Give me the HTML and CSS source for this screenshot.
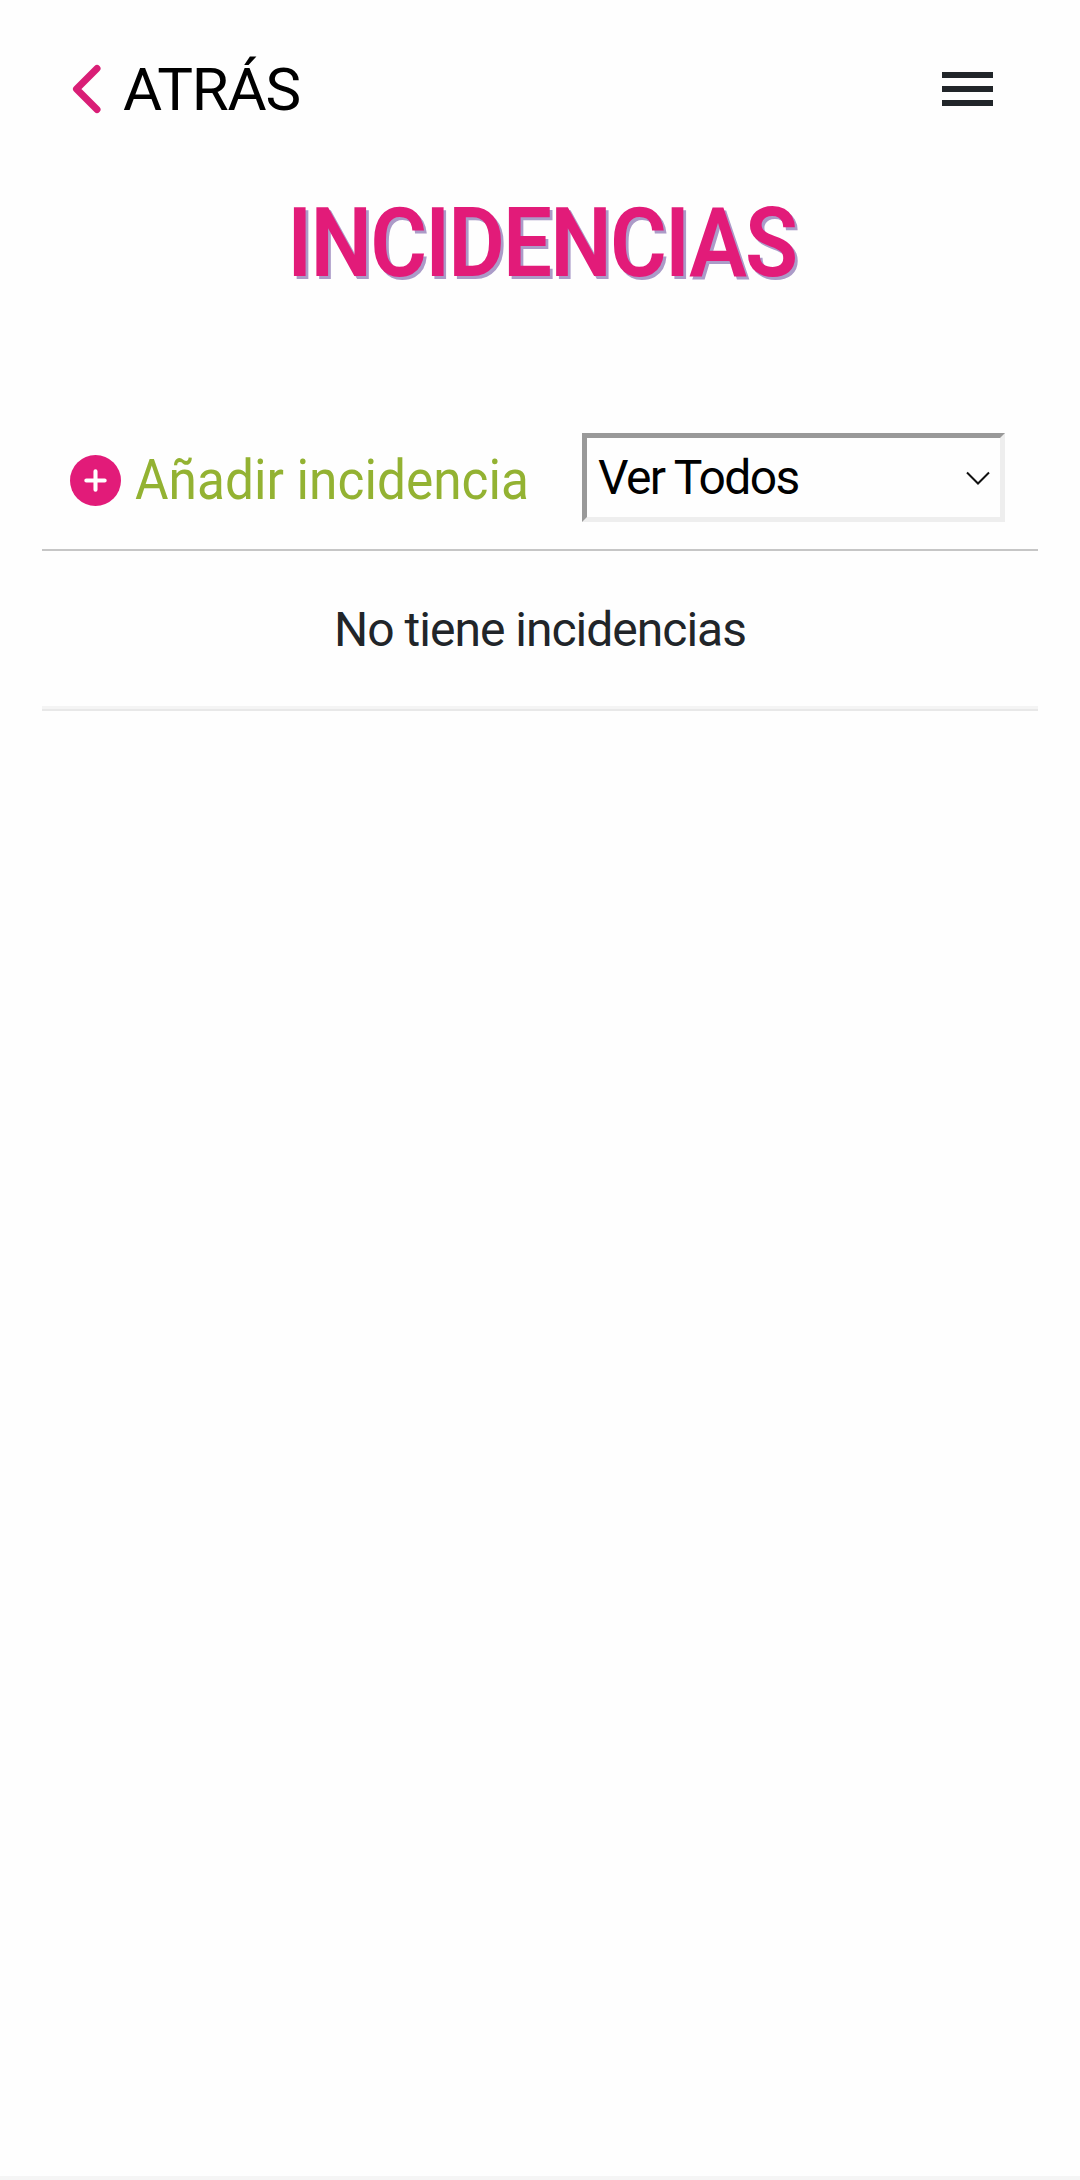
FILE: index.html
```html
<!DOCTYPE html>
<html lang="es">

<head>
    <meta charset="UTF-8">
    <meta name="viewport" content="width=device-width, initial-scale=1.0">
    <title>Incidencias</title>
    <link rel="stylesheet" href="styles.css">
</head>

<body>

    <header class="header">
        <a href="#" class="back">
            <svg class="back-icon" viewBox="0 0 30 50" fill="none">
                <path d="M25 4.5 L4.5 25 L25 45.5" stroke="#d91e76" stroke-width="7" stroke-linecap="round" stroke-linejoin="round"/>
            </svg>
            <span>ATRÁS</span>
        </a>
        <button class="menu-btn" aria-label="Menú">
            <span></span>
            <span></span>
            <span></span>
        </button>
    </header>

    <h1 class="title">INCIDENCIAS</h1>

    <main class="content">
        <div class="toolbar">
            <a href="#" class="add">
                <svg class="add-icon" viewBox="0 0 50 50">
                    <circle cx="25" cy="25" r="25" fill="#e21b79"/>
                    <path d="M25 16 V34 M16 25 H34" stroke="#fff" stroke-width="4" stroke-linecap="round"/>
                </svg>
                <span class="add-text">Añadir incidencia</span>
            </a>
            <div class="filter">
                <select class="filter-select">
                    <option>Ver Todos</option>
                </select>
                <svg class="filter-arrow" viewBox="0 0 24 14" fill="none">
                    <path d="M1 1.5 L12 12.5 L23 1.5" stroke="#111" stroke-width="2"/>
                </svg>
            </div>
        </div>
        <div class="empty">No tiene incidencias</div>
    </main>

    <footer class="footer"></footer>

</body>

</html>
```

FILE: styles.css
```css
* {
    box-sizing: border-box;
}

body {
    margin: 0;
    min-height: 100vh;
    display: flex;
    flex-direction: column;
    font-family: Roboto, "Open Sans", sans-serif;
    background-color: #fefefe;
    color: #212529;
}

.header {
    display: flex;
    justify-content: space-between;
    align-items: center;
    height: 178px;
    padding: 0 87px 0 72px;
}

.back {
    display: flex;
    align-items: center;
    gap: 21px;
    font-size: 60px;
    letter-spacing: -1.2px;
    color: #000;
    text-decoration: none;
}

.back-icon {
    width: 30px;
    height: 50px;
}

.menu-btn {
    display: flex;
    flex-direction: column;
    gap: 8px;
    width: 51px;
    padding: 0;
    border: none;
    background: none;
}

.menu-btn span {
    height: 6px;
    background-color: #212529;
}

.title {
    margin: 0;
    padding-left: 4px;
    text-align: center;
    font-size: 95.5px;
    line-height: 131px;
    font-weight: 600;
    letter-spacing: -2px;
    transform: scaleX(0.91);
    color: #e21b79;
    text-shadow: 3px 3px 0 #ab9bc8;
}

.content {
    flex: 1;
    margin: 0 42px;
}

.toolbar {
    display: flex;
    justify-content: space-between;
    align-items: center;
    margin-top: 124px;
    padding: 0 33px 27px 28px;
    border-bottom: 2px solid #c6c6c6;
}

.add {
    display: flex;
    align-items: center;
    gap: 14px;
    width: 480px;
    padding-top: 5px;
    font-size: 55px;
    line-height: 60px;
    white-space: nowrap;
    color: #93b232;
    text-decoration: none;
}

.add-icon {
    flex-shrink: 0;
    width: 51px;
    height: 51px;
}

.add-text {
    transform: scaleX(0.935);
    transform-origin: left;
}

.filter {
    position: relative;
}

.filter-select {
    display: block;
    width: 423px;
    height: 89px;
    padding: 0 11px;
    appearance: none;
    border: 5px solid;
    border-color: #999 #eee #eee #999;
    border-radius: 0;
    background-color: #fefefe;
    font-family: inherit;
    font-size: 48px;
    letter-spacing: -1.6px;
    color: #000;
}

.filter-arrow {
    position: absolute;
    right: 15px;
    top: 38px;
    width: 24px;
    height: 14px;
}

.empty {
    height: 160px;
    line-height: 158px;
    text-align: center;
    font-size: 48px;
    letter-spacing: -1px;
    border-bottom: 2px solid #e8e8e8;
    box-shadow: inset 0 -3px #f4f4f4;
}

.footer {
    height: 4px;
    background-color: #f5f5f5;
}
```
